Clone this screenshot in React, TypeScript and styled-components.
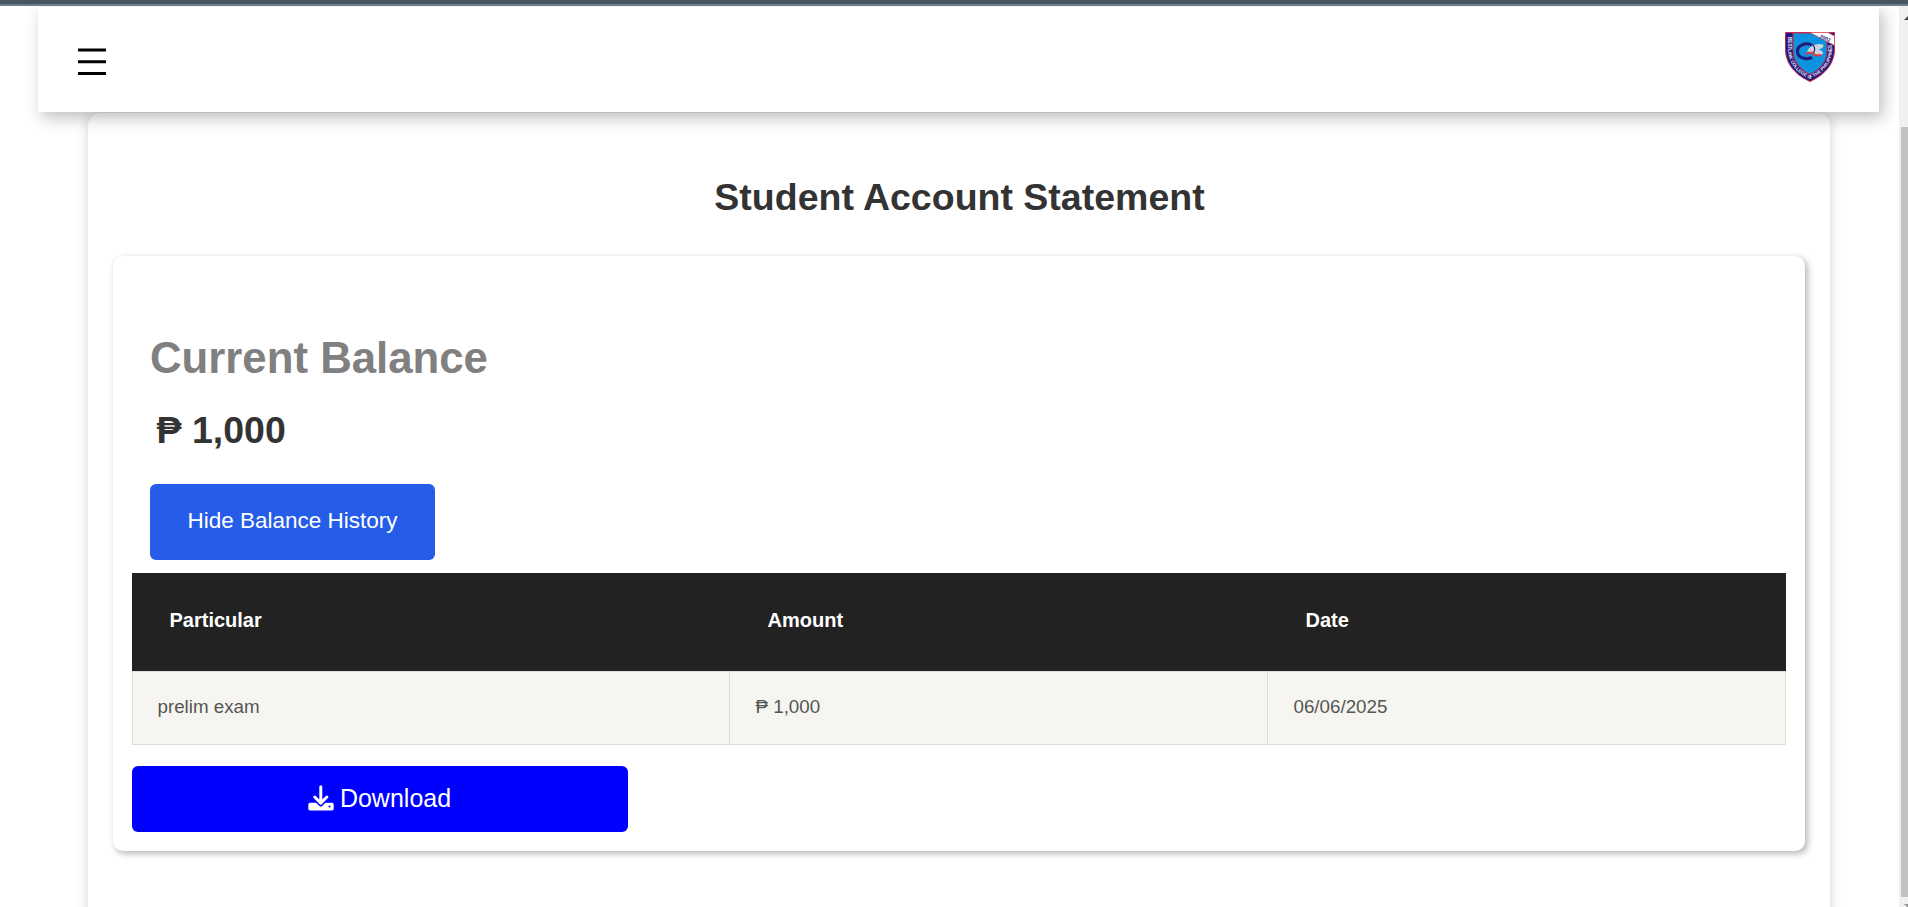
import React from "react";
import styled, { createGlobalStyle } from "styled-components";

const GlobalStyle = createGlobalStyle`
  * { box-sizing: border-box; }
  html, body { margin: 0; height: 100%; overflow: hidden; background: #fff; }
  body { font-family: "Liberation Sans", Arial, sans-serif; color: #333; }
`;

const Window = styled.div`
  height: 907px;
  display: flex;
  flex-direction: column;
  overflow: hidden;
`;

const TopStrip = styled.div`
  flex: none;
  height: 6px;
  background: #455661;
  border-bottom: 2px solid #6f7c85;
  position: relative;
  z-index: 3;
`;

const Viewport = styled.div`
  flex: 1;
  display: flex;
  min-height: 0;
`;

const Page = styled.main`
  flex: 1;
  min-width: 0;
  overflow: hidden;
`;

const Header = styled.header`
  position: relative;
  z-index: 2;
  height: 106px;
  margin: 0 20px 0 38px;
  padding: 0 44px 0 40px;
  display: flex;
  align-items: flex-start;
  justify-content: space-between;
  background: #fff;
  border-top: 1px solid #f1f1f1;
  box-shadow: 4px 6px 15px rgba(0, 0, 0, 0.25);
`;

const MenuButton = styled.button`
  margin: 41px 0 0;
  padding: 0;
  border: 0;
  background: none;
  line-height: 0;
`;

const LogoLink = styled.a`
  margin-top: 25px;
  line-height: 0;
`;

const Statement = styled.section`
  height: 900px;
  margin: 1px 69px 0 88px;
  padding: 0 25px;
  border-radius: 12px;
  background: #fff;
  box-shadow: 0 0 12px rgba(0, 0, 0, 0.18);
`;

const Title = styled.h1`
  margin: 0;
  padding: 63px 0 0 1px;
  height: 143px;
  font-size: 37.5px;
  line-height: 43px;
  text-align: center;
  color: #333;
`;

const BalanceCard = styled.div`
  height: 595px;
  padding: 77px 19px 19px;
  border-radius: 10px;
  background: #fff;
  box-shadow: 2.5px 2.5px 6.25px rgba(0, 0, 0, 0.27);
`;

const Summary = styled.div`
  padding-left: 18px;
`;

const Label = styled.h2`
  margin: 0;
  font-size: 43.75px;
  line-height: 50px;
  color: #808080;
`;

const Amount = styled.p`
  margin: 26px 0 0 6.5px;
  font-size: 37.5px;
  line-height: 43px;
  font-weight: 700;
`;

const HistoryButton = styled.button`
  display: block;
  margin-top: 32px;
  width: 285px;
  height: 76px;
  padding: 0 0 3px;
  border: 0;
  border-radius: 6px;
  background: #255de9;
  color: #fff;
  font: 22.5px "Liberation Sans", Arial, sans-serif;
`;

const Table = styled.table`
  width: 1654px;
  margin-top: 13px;
  border-collapse: separate;
  border-spacing: 0;
  table-layout: fixed;
`;

const HeadCell = styled.th<{ $width: number }>`
  width: ${(p) => p.$width}px;
  height: 98px;
  padding: 0 0 3px 37.5px;
  background: #222;
  color: #fff;
  font-size: 20px;
  text-align: left;
`;

const Cell = styled.td`
  height: 74px;
  padding: 0 25px 2px 24.5px;
  border: 1px solid #ddd;
  background: #f6f5f1;
  color: #555;
  font-size: 18.75px;

  & + & {
    border-left: 0;
    padding-left: 25.5px;
  }
`;

const DownloadButton = styled.button`
  display: flex;
  align-items: center;
  justify-content: center;
  gap: 6px;
  width: 496px;
  height: 66px;
  margin-top: 21px;
  padding: 0 1px 1px 0;
  border: 0;
  border-radius: 6px;
  background: #00f;
  color: #fff;
  font: 25px "Liberation Sans", Arial, sans-serif;
`;

const DownloadGlyph = styled.svg`
  width: 26px;
  height: 26px;
  margin-bottom: 1px;
`;

const ScrollTrack = styled.div`
  flex: none;
  width: 9px;
  display: flex;
  flex-direction: column;
  align-items: flex-end;
  background: #f0f0f0;
  overflow: hidden;
`;

const ScrollArrow = styled.svg`
  display: block;
  flex: none;
  width: 4px;
  height: 4px;
`;

const ScrollThumb = styled.div`
  flex: none;
  width: 7px;
  height: 770px;
  margin: 107px 0 7px;
  background: #c1c1c1;
`;

const ArrowUp = styled(ScrollArrow)`
  margin-top: 10px;
`;

const Crest = () => (
  <svg width="50" height="50" viewBox="0 0 50 50" fontFamily="Liberation Sans, Arial, sans-serif" fontWeight="700">
    <path d="M.5 .5H49.500V17C49.500 34 37 44 25 49.500C13 44 .5 34 .5 17Z" fill="#24187a" stroke="#c92a4c" />
    <path d="M8 1H34L42 9V19C42 30 34 38 25 42.500C16 38 8 30 8 19Z" fill="#0c93e0" stroke="#c92a4c" />
    <path d="M25 .5H43L49.500 4V13.500Z" fill="#fff" stroke="#d8404f" strokeWidth=".6" />
    <path id="crest-band" d="M3 5V18C3.500 33 14 42 25 47C36 42 46.500 33 47 18V14" fill="none" />
    <text fontSize="4.600" fill="#e9e6f5">
      <textPath href="#crest-band" textLength="95" lengthAdjust="spacing">BESTLINK COLLEGE OF THE PHILIPPINES</textPath>
    </text>
    <text x="34.500" y="5.500" fontSize="5" fill="#24187a" transform="rotate(25 34.500 5.500)">2002</text>
    <path d="M22 19.500C24 13.500 33 10.500 38 12.500C39.500 15 37 17 33 17.500C38 18.500 39.500 21.500 36.500 23C32 24.500 30 20 22 19.500Z" fill="#cdd3dc" />
    <path d="M26.500 13C20 10 12.500 13.500 12.500 19.300C12.500 25.200 19 28.500 27 25.500" fill="none" stroke="#24187a" strokeWidth="3" />
    <path d="M25.500 12C29.500 13 31 17 28.500 21" fill="none" stroke="#24187a" strokeWidth="1.200" />
    <path d="M20.500 22L27 20.500L30 23.300H36.500" fill="none" stroke="#e23a3f" strokeWidth="2" />
  </svg>
);

const DownloadIcon = () => (
  <DownloadGlyph viewBox="0 0 26 26">
    <path
      d="M2 17.700H8L11.500 21Q12.800 22.100 14.100 21L17.600 17.700H24Q25.700 17.700 25.700 19.400V23.800Q25.700 25.500 24 25.500H2Q.3 25.500 .3 23.800V19.400Q.3 17.700 2 17.700Z"
      fill="#fff"
    />
    <path
      d="M12.800 1.700V17M6.700 12L12.800 18.100L18.900 12"
      fill="none"
      stroke="#fff"
      strokeWidth="3"
      strokeLinecap="round"
      strokeLinejoin="round"
    />
    <circle cx="21.500" cy="21.600" r="1" fill="#00f" />
  </DownloadGlyph>
);

const columns = [
  { name: "Particular", width: 598 },
  { name: "Amount", width: 538 },
  { name: "Date", width: 518 },
];
const rows = [["prelim exam", "₱ 1,000", "06/06/2025"]];

export default function App() {
  return (
    <Window>
      <GlobalStyle />
      <TopStrip />
      <Viewport>
        <Page>
          <Header>
            <MenuButton aria-label="Menu">
              <svg width="28" height="28" viewBox="0 0 28 28" stroke="#000" strokeWidth="3">
                <path d="M0 2H28M0 13.800H28M0 25.500H28" />
              </svg>
            </MenuButton>
            <LogoLink><Crest /></LogoLink>
          </Header>
          <Statement>
            <Title>Student Account Statement</Title>
            <BalanceCard>
              <Summary>
                <Label>Current Balance</Label>
                <Amount>₱ 1,000</Amount>
                <HistoryButton>Hide Balance History</HistoryButton>
              </Summary>
              <Table>
                <thead>
                  <tr>
                    {columns.map((c) => <HeadCell key={c.name} $width={c.width}>{c.name}</HeadCell>)}
                  </tr>
                </thead>
                <tbody>
                  {rows.map((r) => (
                    <tr key={r[0]}>{r.map((v) => <Cell key={v}>{v}</Cell>)}</tr>
                  ))}
                </tbody>
              </Table>
              <DownloadButton><DownloadIcon />Download</DownloadButton>
            </BalanceCard>
          </Statement>
        </Page>
        <ScrollTrack>
          <ArrowUp viewBox="0 0 4 4"><path d="M4 0V4H0Z" fill="#444" /></ArrowUp>
          <ScrollThumb />
          <ScrollArrow viewBox="0 0 4 4"><path d="M0 0H4V4Z" fill="#999" /></ScrollArrow>
        </ScrollTrack>
      </Viewport>
    </Window>
  );
}
